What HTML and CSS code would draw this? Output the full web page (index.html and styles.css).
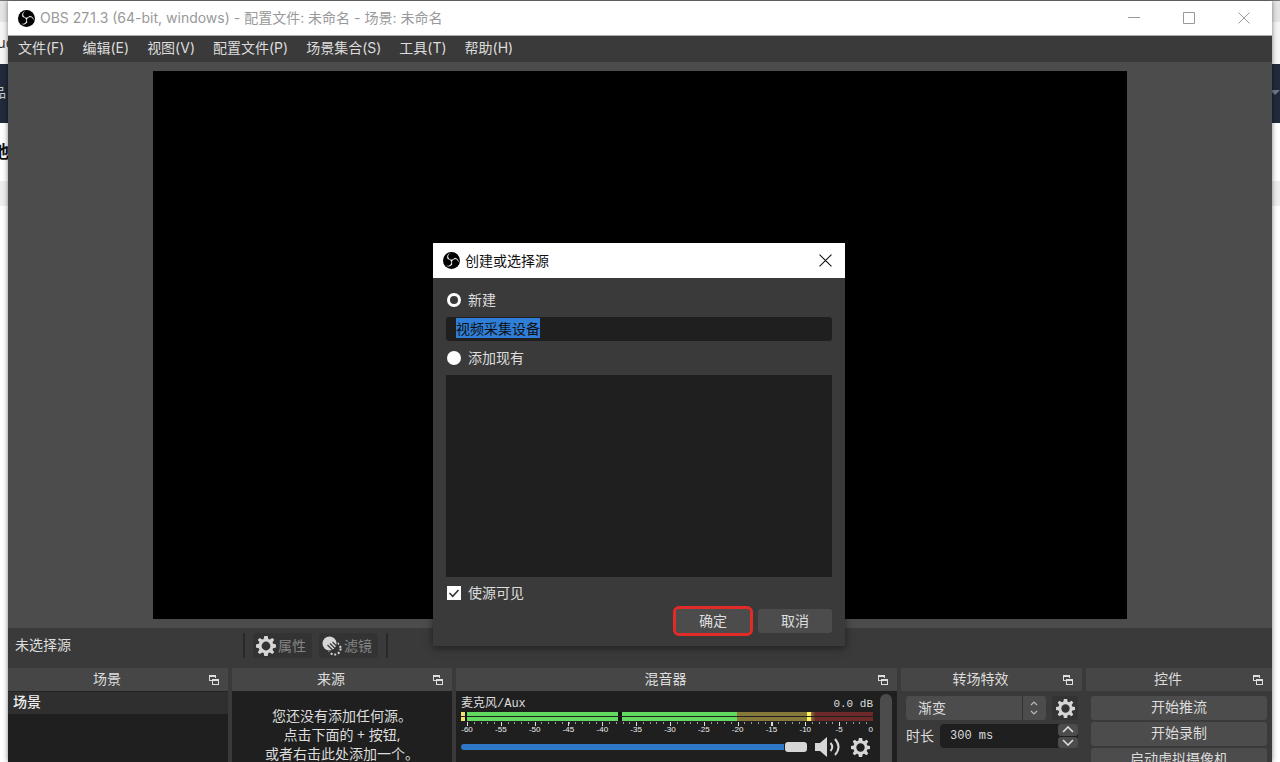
FILE: index.html
```html
<!DOCTYPE html>
<html lang="zh-CN">
<head>
<meta charset="utf-8">
<title>OBS 27.1.3</title>
<link rel="stylesheet" href="styles.css">
</head>
<body>
<svg class="defs" aria-hidden="true">
  <symbol id="obs" viewBox="0 0 24 24"><circle cx="12" cy="12" r="12" fill="#000"/><path fill="#fff" stroke="#fff" stroke-width=".4" d="M6.182,5.99c0.352-1.698,1.503-3.229,3.05-3.996c-0.269,0.273-0.595,0.483-0.844,0.78c-1.02,1.1-1.48,2.692-1.199,4.156c0.355,2.235,2.455,4.06,4.732,4.028c1.765,0.079,3.485-0.937,4.348-2.468c1.848,0.063,3.645,1.017,4.7,2.548c0.54,0.799,0.962,1.736,0.991,2.711c-0.342-1.295-1.202-2.446-2.375-3.095c-1.135-0.639-2.529-0.802-3.772-0.425c-1.56,0.448-2.849,1.723-3.293,3.293c-0.377,1.25-0.216,2.628,0.377,3.772c-0.825,1.429-2.315,2.449-3.932,2.756c-1.244,0.261-2.551,0.059-3.709-0.464c1.036,0.302,2.161,0.355,3.191-0.011c1.381-0.457,2.522-1.567,3.024-2.935c0.556-1.49,0.345-3.261-0.591-4.54c-0.7-1.007-1.803-1.717-3.002-1.969c-0.38-0.068-0.764-0.098-1.148-0.134c-0.611-1.231-0.834-2.66-0.528-3.996z"/></symbol>
  <symbol id="float" viewBox="0 0 10 10"><path d="M0 0h7v3H6V2H1v3h2v1H0z" fill="#ddd"/><path d="M3 4h7v6H3zM4 6v3h5V6z" fill="#ddd" fill-rule="evenodd"/></symbol>
  <symbol id="gear" viewBox="0 0 20 20"><path fill="#d6d6d6" fill-rule="evenodd" d="M8.300 0h3.400l.6 2.900 1.500.6L16.300 1.900l1.900 1.900-1.700 2.500.6 1.500 2.900.6v3.200l-2.900.6-.6 1.500 1.700 2.500-1.900 1.900-2.500-1.600-1.500.6-.6 2.900H8.300l-.6-2.900-1.500-.6-2.500 1.600-1.900-1.900 1.600-2.500-.6-1.500-2.800-.6V8.400l2.800-.6.600-1.500-1.600-2.500 1.900-1.900 2.500 1.600 1.500-.6zM10 5.600a4.400 4.400 0 1 0 0 8.800 4.400 4.400 0 0 0 0-8.800z"/></symbol>
  <symbol id="close" viewBox="0 0 12 12"><path d="M.5.5l11 11M11.500.5l-11 11" fill="none" stroke="currentColor"/></symbol>
</svg>

<div class="backdrop" aria-hidden="true">
  <div class="strip tabs"></div>
  <div class="strip address"><span>uc</span></div>
  <div class="strip navbar"><span>品</span><i class="caret"></i></div>
  <div class="strip heading"><span>地</span></div>
  <div class="strip divider"></div>
  <div class="strip rest"></div>
</div>

<div class="window">
  <header class="titlebar">
    <svg class="logo"><use href="#obs"/></svg>
    <h1>OBS 27.1.3 (64-bit, windows) - 配置文件: 未命名 - 场景: 未命名</h1>
    <div class="window-buttons">
      <button type="button" aria-label="最小化"><svg viewBox="0 0 12 12"><path d="M0 5.500h12" stroke="currentColor"/></svg></button>
      <button type="button" aria-label="最大化"><svg viewBox="0 0 12 12"><path d="M.5.5h11v11H.5z" fill="none" stroke="currentColor"/></svg></button>
      <button type="button" aria-label="关闭"><svg><use href="#close"/></svg></button>
    </div>
  </header>
  <nav class="menubar">
    <button type="button">文件(F)</button>
    <button type="button">编辑(E)</button>
    <button type="button">视图(V)</button>
    <button type="button">配置文件(P)</button>
    <button type="button">场景集合(S)</button>
    <button type="button">工具(T)</button>
    <button type="button">帮助(H)</button>
  </nav>

  <main class="preview"><div class="canvas"></div></main>

  <section class="context">
    <span class="context-name">未选择源</span>
    <div class="context-tools">
      <button type="button" disabled><svg><use href="#gear"/></svg>属性</button>
      <button type="button" disabled><svg viewBox="0 0 20 20"><circle cx="12.600" cy="12.600" r="6" fill="none" stroke="#d6d6d6" stroke-width="2" stroke-dasharray="2 1.770"/><circle cx="7.800" cy="7.800" r="8" fill="#333"/><circle cx="7.500" cy="7.500" r="7" fill="#d6d6d6"/><path d="M5.500 9l6 6M8 7.500l6 6M10.500 6l5 5" stroke="#333" stroke-width="1.100"/></svg>滤镜</button>
    </div>
  </section>

  <div class="docks">
    <section class="dock">
      <header><h2>场景</h2><button type="button" aria-label="浮动场景"><svg><use href="#float"/></svg></button></header>
      <ul class="scene-list"><li>场景</li></ul>
    </section>
    <section class="dock">
      <header><h2>来源</h2><button type="button" aria-label="浮动来源"><svg><use href="#float"/></svg></button></header>
      <p class="sources">您还没有添加任何源。<br>点击下面的 + 按钮,<br>或者右击此处添加一个。</p>
    </section>
    <section class="dock">
      <header><h2>混音器</h2><button type="button" aria-label="浮动混音器"><svg><use href="#float"/></svg></button></header>
      <div class="mixer">
        <div class="channel">
          <div class="channel-name"><label for="volume">麦克风/Aux</label><output>0.0 dB</output></div>
          <div class="meter"></div>
          <div class="meter"></div>
          <div class="ticks"></div>
          <div class="scale"><span>-60</span><span>-55</span><span>-50</span><span>-45</span><span>-40</span><span>-35</span><span>-30</span><span>-25</span><span>-20</span><span>-15</span><span>-10</span><span>-5</span><span>0</span></div>
          <div class="volume-row">
            <input id="volume" type="range" min="0" max="100" value="100">
            <button type="button" aria-label="静音"><svg class="speaker" viewBox="0 0 26 20"><path d="M0 6h5l7-6v20l-7-6H0z" fill="#d6d6d6"/><path d="M15.500 6q3.500 4 0 8M20 2q7 8 0 16" fill="none" stroke="#d6d6d6" stroke-width="2"/></svg></button>
            <button type="button" aria-label="音频设置"><svg class="gear"><use href="#gear"/></svg></button>
          </div>
        </div>
        <div class="scrollbar"></div>
      </div>
    </section>
    <section class="dock">
      <header><h2>转场特效</h2><button type="button" aria-label="浮动转场特效"><svg><use href="#float"/></svg></button></header>
      <div class="transitions">
        <div class="field-row">
          <div class="combo">
            <select aria-label="转场"><option>渐变</option></select>
            <svg viewBox="0 0 8 14"><path d="M1 4l3-3 3 3M1 10l3 3 3-3" fill="none" stroke="#bbb" stroke-width="1.200"/></svg>
          </div>
          <button type="button" class="gear-button" aria-label="转场设置"><svg><use href="#gear"/></svg></button>
        </div>
        <div class="field-row">
          <label for="duration">时长</label>
          <div class="spin">
            <input id="duration" type="text" value="300 ms">
            <div class="spin-buttons">
              <button type="button" aria-label="增加"><svg viewBox="0 0 12 7"><path d="M1 6l5-5 5 5" fill="none" stroke="#ddd" stroke-width="1.600"/></svg></button>
              <button type="button" aria-label="减少"><svg viewBox="0 0 12 7"><path d="M1 1l5 5 5-5" fill="none" stroke="#ddd" stroke-width="1.600"/></svg></button>
            </div>
          </div>
        </div>
      </div>
    </section>
    <section class="dock">
      <header><h2>控件</h2><button type="button" aria-label="浮动控件"><svg><use href="#float"/></svg></button></header>
      <div class="controls">
        <button type="button">开始推流</button>
        <button type="button">开始录制</button>
        <button type="button">启动虚拟摄像机</button>
      </div>
    </section>
  </div>
</div>

<div class="overlay">
  <form class="dialog" role="dialog" aria-labelledby="dialog-title">
    <header>
      <svg class="logo"><use href="#obs"/></svg>
      <h2 id="dialog-title">创建或选择源</h2>
      <button type="button" aria-label="关闭"><svg><use href="#close"/></svg></button>
    </header>
    <div class="dialog-body">
      <label class="choice"><input type="radio" name="mode" checked>新建</label>
      <input id="source-name" class="source-name" type="text" aria-label="源名称" value="视频采集设备">
      <label class="choice"><input type="radio" name="mode">添加现有</label>
      <div class="source-list" role="listbox" aria-label="现有源"></div>
      <label class="choice visible"><input type="checkbox" checked><svg viewBox="0 0 14 14"><path d="M2.500 7l3.200 3.300L11.500 4" fill="none" stroke="#333" stroke-width="1.500"/></svg>使源可见</label>
      <div class="dialog-buttons">
        <button type="button" class="confirm">确定</button>
        <button type="button">取消</button>
      </div>
    </div>
  </form>
</div>
<script src="app.js"></script>
</body>
</html>
```

FILE: styles.css
```css
* { box-sizing: border-box; }

body {
  margin: 0;
  height: 100vh;
  overflow: hidden;
  background: #fff;
  color: #ddd;
  font: 14px/20px "Noto Sans", "Noto Sans CJK SC", sans-serif;
}

h1, h2, p, ul { margin: 0; padding: 0; font-size: 14px; font-weight: 400; }
ul { list-style: none; }
button, input, select { font: inherit; color: inherit; border: 0; padding: 0; margin: 0; background: none; }
svg { display: block; flex: none; }
.defs { position: absolute; width: 0; height: 0; }

/* Page behind the application window */
.backdrop { position: absolute; inset: 0; display: flex; flex-direction: column; }
.strip { display: flex; align-items: center; justify-content: space-between; overflow: hidden; }
.tabs { height: 22px; background: #e3e4e6; border-top: 1px solid #777; }
.address { height: 42px; background: #f5f5f5; color: #333; }
.address span { margin-left: -3px; }
.navbar { height: 59px; padding-bottom: 3px; background: #202a3a; color: #ccc; font-size: 13px; }
.navbar span { margin-left: -7px; }
.caret { border: 5px solid transparent; border-top-color: #707a88; border-bottom: 0; }
.heading { height: 58px; color: #111; font-size: 17px; font-weight: 700; }
.heading span { margin-left: -8px; }
.divider { height: 25px; background: #efeff1; }
.rest { flex: 1; }

.window {
  position: relative;
  display: flex;
  flex-direction: column;
  height: calc(100vh - 1px);
  margin: 1px 8px 0;
  background: #3a3a3a;
  box-shadow: 0 0 5px rgba(0, 0, 0, .5);
}

.titlebar { display: flex; align-items: center; height: 35px; padding: 0 1px 0 10px; background: #fff; color: #999; border-bottom: 1px solid #aaa; }
.logo { width: 17px; height: 17px; margin-right: 5px; }
.titlebar h1 { flex: 1; font-family: Inter, "Noto Sans CJK SC", sans-serif; }
.window-buttons { display: flex; }
.window-buttons button { width: 55px; height: 30px; display: grid; place-items: center; }
.window-buttons svg { width: 12px; height: 12px; }

.menubar { display: flex; gap: 18px; height: 26px; padding: 0 10px 2px; font-family: Inter, "Noto Sans CJK SC", sans-serif; }

.preview { flex: 1; min-height: 0; display: flex; justify-content: center; padding: 9px; background: #4c4c4c; }
.canvas { height: 100%; aspect-ratio: 16 / 9; background: #000; }

.context { display: flex; height: 40px; padding: 5px 7px; }
.context-name { width: 228px; line-height: 24px; }
.context-tools { display: flex; gap: 7px; height: 25px; padding: 0 8px; border: solid #292929; border-width: 0 2px; }
.context-tools button { display: flex; align-items: center; gap: 2px; padding: 0 6px 0 3px; background: #333; color: #858585; border-radius: 3px; }
.context-tools svg { width: 20px; height: 20px; }

/* Docks */
.docks { display: grid; grid-template-columns: 220fr 220fr 441fr 181fr 186fr; gap: 4px; height: 94px; overflow: hidden; }
.dock { min-width: 0; display: flex; flex-direction: column; }
.dock > header { display: flex; flex: none; align-items: center; height: 23px; background: #464646; }
.dock h2 { flex: 1; padding-bottom: 2px; text-align: center; }
.dock > header button { width: 22px; padding-left: 3px; }
.dock > header svg { width: 10px; height: 10px; }

.scene-list { flex: 1; background: #1f1f1f; }
.scene-list li { padding: 0 5px; height: 23px; background: #2f2f2f; border-top: 1px solid #222; font-weight: 500; color: #eee; }
.sources { flex: 1; padding-top: 15px; background: #1f1f1f; text-align: center; line-height: 19px; white-space: nowrap; }

.mixer { flex: 1; display: flex; gap: 7px; padding: 3px 5px 0; background: #1f1f1f; }
.channel { flex: 1; min-width: 0; }
.channel-name { display: flex; justify-content: space-between; height: 18px; font: 12px/20px "Liberation Mono", "Noto Sans CJK SC", monospace; }
.channel-name output { font-size: 11px; }
.meter {
  height: 4px;
  margin-bottom: 1px;
  background: linear-gradient(to right,
    #f3e36b 0 4px, #111 4px 6px,
    #62d95f 6px 38%, #111 38% 39%,
    #62d95f 39% 67%, #86793a 67% 84%,
    #fff35c 84% 85%, #86793a 85%, #6e2929 86%);
}
.ticks {
  height: 4px;
  margin-left: 6px;
  background:
    repeating-linear-gradient(to right, #ddd 0 1px, transparent 1px calc(100% / 12)),
    repeating-linear-gradient(to right, #999 0 1px, transparent 1px calc(100% / 60)) top / 100% 2px no-repeat;
}
.scale { display: flex; justify-content: space-between; font: 8px/8px "Liberation Sans", sans-serif; color: #eee; }
.scale span { width: 12px; text-align: center; }
.scale span:last-child { text-align: right; width: 6px; }
.volume-row { display: flex; align-items: center; height: 26px; }
.volume-row input { flex: 1; min-width: 0; height: 20px; appearance: none; }
.volume-row input::-webkit-slider-runnable-track { height: 6px; border-radius: 3px; background: #2f78c8; }
.volume-row input::-webkit-slider-thumb { appearance: none; width: 22px; height: 10px; margin-top: -2px; border-radius: 3px; background: #d6d6d6; box-shadow: 0 0 0 1px #1f1f1f; }
.volume-row button { margin-left: 8px; }
.speaker { width: 26px; height: 20px; }
.volume-row .gear { width: 19px; height: 19px; margin: 0 3px 0 2px; }
.scrollbar { width: 12px; border-radius: 6px 6px 0 0; background: #4c4c4c; }

.transitions { display: grid; grid-template-columns: minmax(0, 1fr); gap: 4px; padding: 5px 4px 0 5px; }
.field-row { display: flex; gap: 6px; height: 24px; }
.field-row > label { line-height: 24px; }
.combo { position: relative; flex: 1; min-width: 0; }
.combo select { width: 100%; height: 24px; padding-left: 12px; appearance: none; border-radius: 3px; background: linear-gradient(to left, #4c4c4c 23px, #333 23px 24px, #4c4c4c 24px); }
.combo svg { position: absolute; right: 8px; top: 5px; width: 8px; height: 14px; pointer-events: none; }
.gear-button { display: grid; place-items: center; width: 26px; background: #333; border-radius: 3px; }
.gear-button svg { width: 19px; height: 19px; }
.spin { flex: 1; min-width: 0; display: flex; background: #1f1f1f; border-radius: 4px; }
.spin input { flex: 1; min-width: 0; width: 0; padding-left: 10px; font: 12px/24px "Liberation Mono", monospace; }
.spin-buttons { display: grid; gap: 1px; width: 20px; }
.spin-buttons button { display: grid; place-items: center; background: #4c4c4c; border-radius: 3px; }
.spin-buttons svg { width: 12px; height: 7px; }

.controls { display: grid; gap: 2px; padding: 5px 5px 0; }
.controls button { height: 24px; padding-bottom: 2px; background: #4c4c4c; border-radius: 3px; }

/* Source dialog */
.overlay { position: absolute; inset: 0; display: flex; justify-content: center; align-items: flex-start; padding: 243px 2px 0 0; }
.dialog { width: 412px; background: #3a3a3a; box-shadow: 0 2px 8px rgba(0, 0, 0, .5); }
.dialog > header { display: flex; align-items: center; height: 35px; padding: 0 13px 0 10px; background: #fff; color: #111; }
.dialog > header h2 { flex: 1; }
.dialog > header svg:not(.logo) { width: 13px; height: 13px; }
.dialog-body { display: flex; flex-direction: column; gap: 7px; padding: 12px 13px 13px; }
.choice { display: flex; align-items: center; gap: 7px; height: 20px; position: relative; }
.choice input { appearance: none; width: 14px; height: 14px; margin-left: 1px; background: #fff; }
.choice input[type="radio"] { border-radius: 50%; }
.choice input[type="radio"]:checked { border: 3px solid #fff; background: #3a3a3a; }
.choice.visible { height: 18px; }
.choice.visible svg { position: absolute; left: 1px; width: 14px; height: 14px; }
.source-name { height: 24px; padding: 0 10px 2px; background: #1f1f1f; border-radius: 3px; outline: 0; font: 14px/16px "Noto Sans CJK SC", sans-serif; }
.source-name::selection { background: #2f7fd8; color: #111; }
.source-list { height: 202px; background: #1f1f1f; }
.dialog-buttons { display: flex; justify-content: flex-end; gap: 8px; }
.dialog-buttons button { width: 74px; height: 24px; background: #4c4c4c; border-radius: 3px; }
.dialog-buttons .confirm { outline: 3px solid #e22b26; outline-offset: 0; }
```

FILE: app.js
```js
const sourceName = document.getElementById('source-name');
sourceName.focus();
sourceName.select();
```
